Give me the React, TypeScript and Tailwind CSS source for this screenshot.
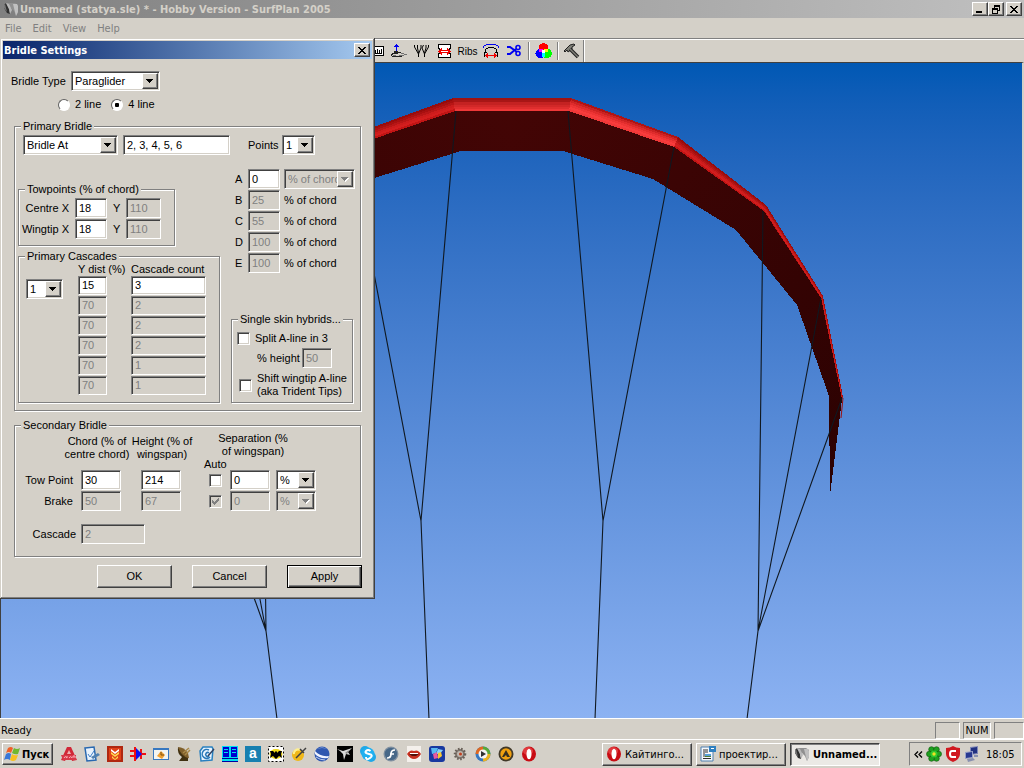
import React, { useState } from "react";

const sunken =
  "border border-t-[#808080] border-l-[#808080] border-r-white border-b-white shadow-[inset_1px_1px_0_#404040,inset_-1px_-1px_0_#d4d0c8]";
const raised =
  "border border-t-white border-l-white border-r-[#404040] border-b-[#404040] shadow-[inset_-1px_-1px_0_#808080] bg-[#d4d0c8]";

type FieldProps = {
  label: string;
  value: string;
  className: string;
  disabled?: boolean;
  id?: string;
};

function Field({ label, value, className, disabled, id }: FieldProps) {
  return (
    <input
      id={id}
      type="text"
      aria-label={label}
      defaultValue={value}
      disabled={disabled}
      className={`${sunken} ${className} shrink-0 rounded-none px-[3px] pb-px text-[11px] leading-3 outline-none disabled:bg-[#d4d0c8] disabled:text-[#808080] ${
        disabled ? "" : "bg-white"
      }`}
    />
  );
}

function DropDown({ label, value, className, disabled, id }: FieldProps) {
  return (
    <div className={`relative h-5 shrink-0 ${className}`}>
      <select
        id={id}
        aria-label={label}
        disabled={disabled}
        className={`${sunken} block h-full w-full appearance-none rounded-none pr-[17px] pl-[3px] text-[11px] leading-3 outline-none disabled:text-[#808080] disabled:opacity-100 ${
          disabled ? "bg-[#d4d0c8]" : "bg-white"
        }`}
      >
        <option>{value}</option>
      </select>
      <span
        className={`${raised} pointer-events-none absolute top-[2px] right-[2px] bottom-[2px] flex w-4 items-center justify-center`}
      >
        <svg width="8" height="5" viewBox="0 0 8 5" shapeRendering="crispEdges">
          {disabled && <path d="M1 1h7v1H7v1H6v1H5v1H4V4H3V3H2V2H1z" fill="#fff" />}
          <path d="M0 0h7v1H6v1H5v1H4v1H3V3H2V2H1V1H0z" fill={disabled ? "#808080" : "#000"} />
        </svg>
      </span>
    </div>
  );
}

function Check({ id, label, checked, disabled }: { id?: string; label?: string; checked?: boolean; disabled?: boolean }) {
  const [on, setOn] = useState(!!checked);
  return (
    <span className="relative block h-[13px] w-[13px] shrink-0">
      <input
        id={id}
        type="checkbox"
        aria-label={label}
        checked={on}
        disabled={disabled}
        onChange={(e) => setOn(e.target.checked)}
        className={`${sunken} block h-[13px] w-[13px] appearance-none ${disabled ? "bg-[#d4d0c8]" : "bg-white"}`}
      />
      {on && (
        <svg className="pointer-events-none absolute inset-0" width="13" height="13" shapeRendering="crispEdges">
          <path
            d="M3 5h1v1h1v1h1V6h1V5h1V4h1V3h1v3H9v1H8v1H7v1H6v1H5V9H4V8H3z"
            fill={disabled ? "#808080" : "#000"}
          />
        </svg>
      )}
    </span>
  );
}

function Radio({ id, checked }: { id: string; checked?: boolean }) {
  return (
    <input
      id={id}
      type="radio"
      name="lines"
      defaultChecked={checked}
      className="h-3 w-3 shrink-0 appearance-none rounded-full border border-t-[#606060] border-r-white border-b-white border-l-[#606060] bg-white checked:bg-[radial-gradient(circle,#000_0_2px,#fff_2.5px)]"
    />
  );
}

function Group({ title, className, children }: { title: string; className: string; children: React.ReactNode }) {
  return (
    <fieldset
      className={`min-w-0 border border-[#808080] shadow-[1px_1px_0_#fff,inset_1px_1px_0_#fff] ${className}`}
    >
      <legend className="ml-[6px] bg-[#d4d0c8] px-[2px] leading-[13px] whitespace-nowrap">{title}</legend>
      {children}
    </fieldset>
  );
}

const chordRows = [
  ["B", "25"],
  ["C", "55"],
  ["D", "100"],
  ["E", "100"],
];

const cascades = [
  ["15", "3"],
  ["70", "2"],
  ["70", "2"],
  ["70", "2"],
  ["70", "1"],
  ["70", "1"],
];

function BridleDialog() {
  return (
    <section
      role="dialog"
      aria-label="Bridle Settings"
      className="absolute top-[38px] left-0 w-[375px] bg-[#d4d0c8] p-[3px] text-[11px] leading-[13px] text-black shadow-[inset_-1px_-1px_0_#404040,inset_1px_1px_0_#d4d0c8,inset_-2px_-2px_0_#808080,inset_2px_2px_0_#fff]"
    >
      <header className="flex h-[18px] items-center justify-between bg-linear-to-r from-[#0a246a] to-[#a6caf0] pr-[2px] pl-px font-['DejaVu_Sans_Condensed','DejaVu_Sans',sans-serif] font-bold text-white">
        <h2>Bridle Settings</h2>
        <button aria-label="Close" className={`${raised} flex h-[14px] w-4 items-center justify-center`}>
          <svg width="8" height="7" viewBox="0 0 8 7" shapeRendering="crispEdges">
            <path d="M0 0h2v1h1v1h2V1h1V0h2v1H7v1H6v1H5v1h1v1h1v1h1v1H6V6H5V5H3v1H2v1H0V6h1V5h1V4h1V3H2V2H1V1H0z" fill="#000" />
          </svg>
        </button>
      </header>

      <div className="mt-3 flex items-center pl-2">
        <label htmlFor="bridle-type" className="w-[60px] whitespace-nowrap">
          Bridle Type
        </label>
        <DropDown id="bridle-type" label="Bridle Type" value="Paraglider" className="w-[89px]" />
      </div>
      <div className="mt-[6px] flex h-[15px] items-center pl-[55px]">
        <Radio id="line2" />
        <label htmlFor="line2" className="mr-[10px] ml-[5px]">2 line</label>
        <Radio id="line4" checked />
        <label htmlFor="line4" className="ml-[5px]">4 line</label>
      </div>

      <Group title="Primary Bridle" className="mx-[11px] mt-2 pb-[7px]">
        <div className="mt-[2px] flex items-center pl-2">
          <DropDown label="Bridle placement" value="Bridle At" className="w-[95px]" />
          <Field label="Bridle at ribs" value="2, 3, 4, 5, 6" className="ml-[5px] h-5 w-[107px]" />
          <label htmlFor="points" className="ml-[18px] w-[34px]">Points</label>
          <DropDown id="points" label="Points" value="1" className="w-[33px]" />
        </div>

        <div className="mt-[14px] flex gap-[11px] pl-[3px]">
          <div className="w-[202px] pt-[14px]">
            <Group title="Towpoints (% of chord)" className="w-[157px] pb-[6px]">
              <div className="mt-[2px] flex flex-col gap-px">
                {["Centre X", "Wingtip X"].map((name) => (
                  <div key={name} className="flex items-center">
                    <label htmlFor={name} className="w-[50px] text-right whitespace-nowrap">{name}</label>
                    <Field id={name} label={name} value="18" className="ml-[6px] h-5 w-8" />
                    <label htmlFor={name + "-y"} className="ml-[6px] w-[13px]">Y</label>
                    <Field id={name + "-y"} label={name + " Y"} value="110" disabled className="h-5 w-[35px]" />
                  </div>
                ))}
              </div>
            </Group>

            <Group title="Primary Cascades" className="mt-1 pb-[7px]">
              <div className="flex pl-[7px]">
                <div className="w-[52px] pt-4">
                  <DropDown label="Cascade level" value="1" className="w-[37px]" />
                </div>
                <div className="w-[53px]">
                  <div className="whitespace-nowrap">Y dist (%)</div>
                  <div className="flex flex-col gap-px">
                    {cascades.map((row, i) => (
                      <Field key={i} label="Y dist" value={row[0]} disabled={i > 0} className="h-[19px] w-[29px]" />
                    ))}
                  </div>
                </div>
                <div>
                  <div className="whitespace-nowrap">Cascade count</div>
                  <div className="flex flex-col gap-px">
                    {cascades.map((row, i) => (
                      <Field key={i} label="Cascade count" value={row[1]} disabled={i > 0} className="h-[19px] w-[75px]" />
                    ))}
                  </div>
                </div>
              </div>
            </Group>
          </div>

          <div className="flex w-[122px] flex-col justify-between">
            <div className="flex flex-col gap-px pl-1">
              <div className="flex items-center">
                <label htmlFor="chord-a" className="w-[13px] shrink-0">A</label>
                <Field id="chord-a" label="A" value="0" className="h-5 w-8" />
                <DropDown label="A unit" value="% of chord" disabled className="ml-1 w-[71px]" />
              </div>
              {chordRows.map(([name, value]) => (
                <div key={name} className="flex items-center">
                  <label htmlFor={"chord-" + name} className="w-[13px] shrink-0">{name}</label>
                  <Field id={"chord-" + name} label={name} value={value} disabled className="h-5 w-8" />
                  <span className="ml-1 whitespace-nowrap">% of chord</span>
                </div>
              ))}
            </div>

            <Group title="Single skin hybrids..." className="pb-1">
              <div className="mt-[6px] flex items-center gap-[5px] pl-[5px]">
                <Check id="split" />
                <label htmlFor="split" className="whitespace-nowrap">Split A-line in 3</label>
              </div>
              <div className="mt-[3px] flex items-center pl-[25px]">
                <label htmlFor="height" className="w-[45px] whitespace-nowrap">% height</label>
                <Field id="height" label="% height" value="50" disabled className="h-5 w-[30px]" />
              </div>
              <div className="mt-1 flex items-center gap-[5px] pl-[7px]">
                <Check id="shift" />
                <label htmlFor="shift" className="whitespace-nowrap">
                  Shift wingtip A-line
                  <br />
                  (aka Trident Tips)
                </label>
              </div>
            </Group>
          </div>
        </div>
      </Group>

      <Group title="Secondary Bridle" className="mx-[11px] mt-2 pb-3">
        <div className="flex h-[38px] text-center whitespace-nowrap">
          <div className="ml-[49px] w-[66px] pt-[3px]">
            Chord (% of
            <br />
            centre chord)
          </div>
          <div className="w-16 pt-[3px]">
            Height (% of
            <br />
            wingspan)
          </div>
          <div className="ml-[10px] w-[98px]">
            <div>
              Separation (%
              <br />
              of wingspan)
            </div>
            <div className="text-left">Auto</div>
          </div>
        </div>
        <div className="flex flex-col gap-px">
          {[
            ["Tow Point", "30", "214"],
            ["Brake", "50", "67"],
          ].map(([name, chord, height], i) => (
            <div key={name} className="flex items-center">
              <span className="w-[58px] text-right whitespace-nowrap">{name}</span>
              <Field label={name + " chord"} value={chord} disabled={i > 0} className="ml-2 h-5 w-10" />
              <Field label={name + " height"} value={height} disabled={i > 0} className="ml-5 h-5 w-10" />
              <span className="ml-7">
                <Check label={name + " auto separation"} checked={i > 0} disabled={i > 0} />
              </span>
              <Field label={name + " separation"} value="0" disabled={i > 0} className="ml-2 h-5 w-10" />
              <DropDown label={name + " unit"} value="%" disabled={i > 0} className="ml-[6px] w-10" />
            </div>
          ))}
        </div>
        <div className="mt-[13px] flex items-center">
          <label htmlFor="cascade" className="w-[61px] text-right">Cascade</label>
          <Field id="cascade" label="Cascade" value="2" disabled className="ml-[5px] h-5 w-16" />
        </div>
      </Group>

      <div className="mt-2 mb-2 flex justify-end gap-5 pr-[10px]">
        <button className={`${raised} h-[23px] w-[75px]`}>OK</button>
        <button className={`${raised} h-[23px] w-[75px]`}>Cancel</button>
        <button className="h-[23px] w-[75px] border border-black bg-[#d4d0c8] shadow-[inset_1px_1px_0_#fff,inset_-1px_-1px_0_#404040,inset_-2px_-2px_0_#808080]">
          Apply
        </button>
      </div>
    </section>
  );
}

// Wing outline from the centre cell out to the tip
type Pt = [number, number];
const outer: Pt[] = [[512, 98], [571, 98], [678, 137], [766, 205], [823, 296], [843, 397]];
const inner: Pt[] = [[512, 111], [569, 111], [674, 147], [764, 211], [821, 298], [842, 399]];
const under: Pt[] = [[512, 151], [563, 151], [653, 179], [736, 230], [797, 305], [829, 396]];
const shades = ["#9f1212", "#a81616", "#c42222", "#d22828", "#df2e2e", "#ef3838"];
const slopeShades = ["#b01414", "#cc2222", "#e02c2c", "#ee3535", "#f83c3c", "#ef3838"];
const edgeShades = ["#980c0c", "#a81010", "#b81616", "#cc1c1c", "#d41e1e", "#c01414"];

function lerp(a: Pt, b: Pt, t: number) {
  return `${a[0] + (b[0] - a[0]) * t},${a[1] + (b[1] - a[1]) * t}`;
}

function HalfWing({ left }: { left?: boolean }) {
  return (
    <g transform={left ? "translate(1024 0) scale(-1 1)" : undefined}>
      <polygon
        points={[...inner, [830, 495] as Pt, ...[...under].reverse()].map((p) => p.join(",")).join(" ")}
        fill="url(#underside)"
        shapeRendering="crispEdges"
      />
      {outer.slice(1).map((_, i) =>
        shades.map((_, k) => {
          const colors = i === 0 ? shades : i === 1 && !left ? slopeShades : edgeShades;
          return (
            <polygon
              key={`${i}-${k}`}
              points={[
                lerp(outer[i], inner[i], k / 6),
                lerp(outer[i + 1], inner[i + 1], k / 6),
                lerp(outer[i + 1], inner[i + 1], (k + 1) / 6),
                lerp(outer[i], inner[i], (k + 1) / 6),
              ].join(" ")}
              fill={colors[k]}
              shapeRendering="crispEdges"
            />
          );
        })
      )}
      <path d="M843 398 841 418" stroke="#9c1010" fill="none" />
      <path
        d="M568 111 603 521 674 147M603 521 595 719M763 211 758 631 821 298M842 398 758 631 747 719"
        fill="none"
        stroke="#101820"
        strokeWidth="1.100"
      />
    </g>
  );
}

function Viewport() {
  return (
    <main className="relative min-h-[560px] flex-1 overflow-hidden border-t border-r-2 border-l border-t-[#404040] border-r-[#d4d0c8] border-l-[#404040] bg-linear-to-b from-[#0058b4] to-[#8cb2f2]">
      <svg
        className="absolute inset-0 h-full w-full"
        viewBox="1 63 1021 655"
        preserveAspectRatio="xMinYMin slice"
        role="img"
        aria-label="Kite model"
      >
        <defs>
          <linearGradient id="underside" x1="0" x2="1" y1="0" y2="1">
            <stop offset="0" stopColor="#430505" />
            <stop offset="1" stopColor="#2c0202" />
          </linearGradient>
        </defs>
        <HalfWing left />
        <HalfWing />
      </svg>
    </main>
  );
}

function Separator() {
  return <span className="h-[18px] w-[2px] border-l border-[#808080] bg-white" />;
}

function ToolBar() {
  const tool = "flex h-5 w-[23px] shrink-0 items-center justify-center";
  return (
    <div className="flex h-[23px] border-t border-white">
      <div className="flex items-center border-r border-[#808080] pl-[364px] shadow-[1px_0_0_#fff]">
        <button aria-label="Measure" className={tool}>
          <svg width="16" height="16" shapeRendering="crispEdges">
            <path d="M0 3h16v10H0z" fill="#000" />
            <path d="M1 4h14v8H1z" fill="#fff" />
            <path d="M3 11h11V6h-1v4h-1V7h-1v3h-1V6H9v4H8V7H7v3H6V6H5v4H4V7H3z" fill="#000" />
          </svg>
        </button>
        <button aria-label="Profile" className={tool}>
          <svg width="18" height="16" shapeRendering="crispEdges">
            <path d="M6 1h1v8H6zM5 2h3v1H5zM4 3h5v1H4z" fill="#0000f0" />
            <path d="M4 8h4v1h3v1H8v1H3v1H2v-2h2zM1 11h1v2H1zM2 13h10v1H2z" fill="#202020" />
            <path d="M11 10h3v1h-3zM9 12h5v1H9zM3 12h3v1H3zM14 11h3v1h-3z" fill="#707070" />
          </svg>
        </button>
        <button aria-label="Bridle" className={tool}>
          <svg width="17" height="16" fill="none" stroke="#000">
            <path d="M5.500 14V11L1.500 4V2M5.500 11 8 5V2M5.500 10 4.500 5V2M11.500 14V11L9 5 10.500 2M11.500 11l4-7V2M11.500 10l1.500-5V2" />
          </svg>
        </button>
        <button aria-label="Width" className={tool}>
          <svg width="15" height="16" shapeRendering="crispEdges">
            <path d="M1 1h13v5h-1v4h1v5H1v-5h1V6H1z" fill="#000" />
            <path d="M2 2h11v3h-1v6h1v3H2v-3h1V5H2z" fill="#fff" />
            <path d="M1 8h1V7h1V6h1V5h1v2h5V5h1v1h1v1h1v1h1v1h-1v1h-1v1h-1v1h-1v-2H5v2H4v-1H3v-1H2V9H1zM4 8v1h7V8z" fill="#f00000" />
          </svg>
        </button>
        <button className={`${tool} text-[10px]`}>Ribs</button>
        <button aria-label="Arc" className={tool}>
          <svg width="18" height="16" shapeRendering="crispEdges">
            <path d="M4 1h10v1H4zM2 2h2v1H2zM14 2h2v1h-2zM1 3h1v2H1zM16 3h1v2h-1z" fill="#0000f0" />
            <path d="M6 4h6v1H6zM4 5h2v1H4zM12 5h2v1h-2zM3 6h1v3H3zM14 6h1v3h-1zM2 9h1v5H2zM15 9h1v5h-1zM2 9h3v1H2zM13 9h3v1h-3z" fill="#000" />
            <path d="M3 12h12v1H3zM5 10h1v5H5zM4 11h1v3H4zM13 11h1v3h-1zM12 10h1v5h-1z" fill="#f00000" />
          </svg>
        </button>
        <button aria-label="Cut" className={tool}>
          <svg width="16" height="14" fill="none" stroke="#0000f0" strokeWidth="2">
            <path d="M1 3h3l7 5M1 10h3l6-5" />
            <circle cx="12" cy="3.500" r="2" strokeWidth="1.600" />
            <circle cx="12" cy="9.500" r="2" strokeWidth="1.600" />
          </svg>
        </button>
        <span className="w-[3px]" />
        <Separator />
        <button aria-label="Colours" className="flex h-5 w-[27px] shrink-0 items-center justify-center">
          <svg width="17" height="16" shapeRendering="crispEdges">
            <circle cx="8.500" cy="5" r="4.800" fill="#f00" />
            <circle cx="5.200" cy="10.500" r="4.800" fill="#00f" />
            <circle cx="12" cy="10.500" r="4.800" fill="#0f0" />
            <path d="M4 6h4v3H4z" fill="#f0f" />
            <path d="M9 6h4v3H9z" fill="#ff0" />
            <path d="M7 9h3v5H7z" fill="#0ff" />
            <path d="M7 7h3v3H7z" fill="#fff" />
          </svg>
        </button>
        <Separator />
        <button aria-label="Build" className="flex h-5 w-6 items-center justify-center">
          <svg width="17" height="16">
            <path d="m1 8 6-6 4-1 1 1-3 2v2L5 9 4 7 2 9z" fill="#808078" stroke="#202020" />
            <path d="m7 6 8 8" stroke="#202020" strokeWidth="3.500" />
            <path d="m7 6 8 8" stroke="#808078" strokeWidth="1.500" />
          </svg>
        </button>
      </div>
    </div>
  );
}

function WingIcon() {
  return (
    <svg width="16" height="16" viewBox="0 0 16 16" className="shrink-0">
      <path d="M3 2h9l3 2v7l-2 4-2-5-3-3-3 1z" fill="#909090" />
      <path d="M10 3h4l1 2v6l-2 4z" fill="#c0c0c0" />
      <path d="M1 4 3 2l3 6 1 5-3-1-3-5z" fill="#303030" />
      <path d="m3 2 3 1 3 6-2 4-1-5z" fill="#b8b8b8" />
      <path d="m1 4 1-1 2 8-3-4z" fill="#787878" />
    </svg>
  );
}

function OperaIcon() {
  return (
    <svg width="16" height="16" viewBox="0 0 16 16" className="shrink-0">
      <ellipse cx="8" cy="8" rx="7" ry="7.500" fill="#c80c14" />
      <ellipse cx="7" cy="5" rx="5" ry="4" fill="#f05858" opacity=".6" />
      <ellipse cx="8" cy="8" rx="2.500" ry="5.300" fill="#fff" />
    </svg>
  );
}

const quickLaunch: { name: string; icon: React.ReactNode }[] = [
  { name: "AutoCAD", icon: <><path d="M6 1h4l6 13-5 1-1-4H6l-2 4-4-1z" fill="#d02838" /><path d="m8 4 2 4H6z" fill="#f0b0b0" /><path d="M0 9h15v5H2z" fill="#d83848" /><path d="M3 12q1-3 3 0V10m2 2q2-3 3 0m1 0V10h2v2" stroke="#f8b0b8" fill="none" /></> },
  { name: "Notes", icon: <><path d="m1 2 9-1 2 13-9 1z" fill="#e8f2fc" stroke="#2868b0" strokeWidth="1.500" /><path d="m4 8 2 3 4-6" stroke="#4080c8" fill="none" /><path d="m7 11 7-4 2 2-7 4z" fill="#5080b0" /></> },
  { name: "Downloads", icon: <><path d="M0 0h16v16H0z" fill="#b02810" /><path d="M2 2h12v12H2z" fill="#e04018" /><path d="m4 3 4 3 4-3v2L8 8 4 5z" fill="#fff" /><path d="m4 6 4 3 4-3v2l-4 3-4-3zM5 10l3 3 3-3v2l-3 2-3-2z" fill="#ffd850" /></> },
  { name: "Diode", icon: <><path d="M0 4h5v2H0zM0 9h5v2H0zM4 1h2v14H4zM11 7h5v2h-5zM10 3h2v10h-2z" fill="#f01010" /><path d="M6 2 12 8l-6 6z" fill="#1010f0" /></> },
  { name: "Scheduler", icon: <><path d="M0 2h16v12H0z" fill="#3878c0" /><path d="M1 4h14v9H1z" fill="#f4f4f0" /><path d="m8 5 4 4-3 4-5-3z" fill="#f0a030" /><path d="M8 6v3h3" stroke="#805010" fill="none" /></> },
  { name: "Satellite", icon: <><path d="M2 1q6 0 10 6l1 5q-5 1-8-3T2 1z" fill="#80602c" /><path d="M2 1q-1 7 4 10l-3 4h9v-3Q5 10 2 1z" fill="#403010" /><path d="m7 7 6-5M9 9l5-5" stroke="#a88848" strokeWidth="1.500" /></> },
  { name: "Mail notes", icon: <><path d="M4 1h9l1 2-1 11-11 1L1 5z" fill="#e8f4ff" stroke="#2880c0" strokeWidth="1.500" /><path d="M10 4a4.500 4.500 0 1 0 1 7M10 7a2 2 0 1 0 0 3" stroke="#2878b8" fill="none" strokeWidth="1.500" /><path d="m9 10 6-7" stroke="#304060" strokeWidth="1.500" /></> },
  { name: "Commander", icon: <g shapeRendering="crispEdges"><path d="M0 0h16v16H0z" fill="#0000a0" /><path d="M0 0h8v12H0zM8 0h8v12H8z" fill="#00e0f0" /><path d="M1 1h6v10H1zM9 1h6v10H9z" fill="#0000d0" /><path d="M2 3h4v1H2zM2 6h4v1H2zM10 3h4v1h-4zM10 6h4v1h-4zM0 13h16v2H0z" fill="#00e0f0" /></g> },
  { name: "Avant", icon: <><path d="M0 0h16v16H0z" fill="#1880b0" /><text x="4" y="12" fontSize="14" fontWeight="bold" fill="#fff" fontFamily="Liberation Sans">a</text></> },
  { name: "The Bat!", icon: <><path d="M.5.500h15v15H.5z" fill="#fff" stroke="#000" strokeDasharray="2 2" /><ellipse cx="8" cy="8" rx="6.500" ry="5" fill="#f0d818" /><path d="M2 5h3l2 2V5l1 1 1-1v2l2-2h3l-1 3 1 4-3-2-3 3-3-3-3 2 1-4z" fill="#000" /></> },
  { name: "Tools", icon: <><circle cx="7" cy="9" r="6" fill="#f0b818" /><path d="M3 8a4 4 0 0 1 6-4" stroke="#fff090" strokeWidth="2" fill="none" /><path d="m5 12 10-10M9 3l4 4" stroke="#404040" strokeWidth="1.500" /></> },
  { name: "Google Earth", icon: <><circle cx="8" cy="8" r="7.500" fill="#3058b0" /><path d="M3 3a7 5 0 0 1 10 0q-5-2-10 0z" fill="#b0c8f0" /><path d="M1 5q5 6 14 5l-1 2Q5 13 1 8z" fill="#f0f4ff" /><path d="M2 11q4 3 9 3" stroke="#c0d0f0" fill="none" /></> },
  { name: "Flight", icon: <><path d="M0 0h16v16H0z" fill="#000" /><path d="m0 3 6 2 3-1 6-2-4 4 2 3-4-1-2 6-1-6-3-3z" fill="#d8d8d8" /><path d="m8 7 4-3-2 4z" fill="#888" /></> },
  { name: "Skype", icon: <><circle cx="5" cy="5" r="5" fill="#20a8e8" /><circle cx="11" cy="11" r="5" fill="#20a8e8" /><circle cx="8" cy="8" r="6.500" fill="#20b0f0" /><path d="M10.500 5Q8 3 6 5t3 3 1 4-4-1" stroke="#fff" strokeWidth="2" fill="none" /></> },
  { name: "Flash", icon: <><circle cx="8" cy="8" r="7.500" fill="#8090a0" /><circle cx="8" cy="8" r="6.200" fill="#486888" /><path d="M12 4Q8 4 8 8t-4 4M7 8h4" stroke="#fff" strokeWidth="1.700" fill="none" /></> },
  { name: "Lips", icon: <><path d="M1 0h14v16H1z" fill="#f4f0ec" /><path d="M1 8Q4 3 8 5q4-2 7 3-3 5-7 5T1 8z" fill="#c83020" /><path d="M3 8h10l-3 2H6z" fill="#501008" /><path d="M4 7h8v1H4z" fill="#fff" /></> },
  { name: "Puzzle", icon: <><rect width="16" height="16" rx="3" fill="#1838a0" /><path d="M2 2h7l-2 5-4 1z" fill="#58b8f0" /><path d="m9 3 5 1-3 4H7z" fill="#88d0f8" /><path d="m4 8 4-2 1 6-4 1z" fill="#e858a0" /><path d="m9 7 3-1 1 4-4 3z" fill="#f8c830" /></> },
  { name: "Settings", icon: <><circle cx="8" cy="8" r="5" fill="#807870" stroke="#686058" strokeWidth="2.500" strokeDasharray="1.500 1.500" /><circle cx="8" cy="8" r="3" fill="#c0b8b0" /><circle cx="8.500" cy="8" r="1.500" fill="#c04020" /></> },
  { name: "Media Player", icon: <><circle cx="8" cy="8" r="7.500" fill="#3878c0" /><path d="M8 8V.5A7.500 7.500 0 0 1 15.500 8z" fill="#58a838" /><path d="M8 8h7.500A7.500 7.500 0 0 1 8 15.500z" fill="#e8b020" /><path d="M8 8H.5A7.500 7.500 0 0 1 8 .5z" fill="#e06820" /><circle cx="8" cy="8" r="4.500" fill="#f4f4f4" /><path d="m6 5 5 3-5 3z" fill="#303030" /></> },
  { name: "AIMP", icon: <><circle cx="8" cy="8" r="7.500" fill="#403828" /><circle cx="8" cy="8" r="5.700" fill="#f0a010" /><path d="m8 4 4 7H9l-1-2-2 2H4z" fill="#383020" /></> },
];

function TaskBar() {
  const task = "flex h-[23px] w-[90px] items-center gap-[3px] overflow-hidden px-[3px] text-left whitespace-nowrap";
  return (
    <footer className="flex h-[29px] items-center border-t border-white px-[2px] font-['DejaVu_Sans_Condensed','DejaVu_Sans',sans-serif] text-[11px]">
      <button className={`${raised} flex h-[22px] w-[51px] items-center gap-px pl-px font-bold`}>
        <svg width="17" height="16" viewBox="0 0 17 16" className="shrink-0">
          <path d="M4 2q3-2 5 0L7 7q-2-2-5 0z" fill="#f06028" />
          <path d="M10 2q3 2 6 0l-2 6q-3 1-6-1z" fill="#70b830" />
          <path d="M2 8q3-2 5 0l-1 6q-3-2-6 0z" fill="#3878d8" />
          <path d="M8 8q2 2 6 1l-2 5q-3 2-6 0z" fill="#f8c020" />
        </svg>
        Пуск
      </button>
      <nav className="ml-2 flex gap-[7px]">
        {quickLaunch.map((item) => (
          <button key={item.name} aria-label={item.name}>
            <svg width="16" height="16" viewBox="0 0 16 16">{item.icon}</svg>
          </button>
        ))}
        <button aria-label="Opera">
          <OperaIcon />
        </button>
      </nav>
      <div className="ml-auto flex gap-1">
        <button className={`${raised} ${task}`}>
          <OperaIcon />
          Кайтинго...
        </button>
        <button className={`${raised} ${task}`}>
          <svg width="16" height="16" viewBox="0 0 16 16" className="shrink-0">
            <path d="M1 1h12v14H1z" fill="#f4f8fc" stroke="#5080b0" />
            <path d="M3 4h5M3 6h5M3 8h2M3 10h2M3 12.500h8" stroke="#303030" />
            <path d="M5 8h6v3H5z" fill="#58a0d8" />
            <path d="M5 10h6v1H5z" fill="#508030" />
            <path d="M9 0h7v6H9z" fill="#3080c0" />
            <path d="M11 2h3v1h-3z" fill="#fff" />
          </svg>
          проектир...
        </button>
        <button
          className={`${task} border border-t-[#404040] border-r-white border-b-white border-l-[#404040] bg-[#ebe9e5] font-bold shadow-[inset_1px_1px_0_#808080]`}
        >
          <WingIcon />
          Unnamed...
        </button>
      </div>
      <div className="ml-[29px] flex h-6 w-[113px] items-center gap-[3px] border border-t-[#808080] border-r-white border-b-white border-l-[#808080] pl-1">
        <button aria-label="Show hidden icons">
          <svg width="9" height="7" fill="none" stroke="#000" strokeWidth="1.300">
            <path d="m4 .5-3 3 3 3M8 .5l-3 3 3 3" />
          </svg>
        </button>
        <svg width="16" height="16" viewBox="0 0 16 16">
          <g fill="#20a020" stroke="#085808" strokeWidth=".6">
            <circle cx="5.500" cy="3.500" r="2.800" /><circle cx="10.500" cy="3.500" r="2.800" />
            <circle cx="12.700" cy="8" r="2.800" /><circle cx="10.500" cy="12.500" r="2.800" />
            <circle cx="5.500" cy="12.500" r="2.800" /><circle cx="3.300" cy="8" r="2.800" />
          </g>
          <circle cx="8" cy="8" r="3.500" fill="#30c830" />
          <circle cx="8" cy="8" r="1.700" fill="#f0e020" />
        </svg>
        <svg width="16" height="16" viewBox="0 0 16 16">
          <path d="M1 2Q5 2 8 0q3 2 7 2v6q0 5-7 8-7-3-7-8z" fill="#d01820" />
          <path d="M11 5H7Q5 5 5 8t2 3h4" fill="none" stroke="#fff" strokeWidth="2" />
        </svg>
        <svg width="16" height="16" viewBox="0 0 16 16">
          <path d="m6 1 8-1v8l-8 1z" fill="#8088b8" />
          <path d="m7 2 6-1v6l-6 1z" fill="#203080" />
          <path d="m1 6 8-1v7l-8 1z" fill="#98a0c8" />
          <path d="m2 7 6-1v5l-6 1z" fill="#283890" />
          <path d="m3 13 6-1 2 2-7 2zM10 9h4v2h-4z" fill="#8890b0" />
        </svg>
        <time className="ml-[3px]">18:05</time>
      </div>
    </footer>
  );
}

export default function App() {
  const caption = `${raised} flex h-[14px] w-4 items-center justify-center`;
  return (
    <div className="relative flex min-h-screen flex-col bg-[#d4d0c8] font-['Liberation_Sans',Arial,sans-serif] text-[11px] leading-[13px] text-black">
      <header className="flex h-[18px] items-center bg-linear-to-r from-[#808080] to-[#c0c0c0] pr-[2px] pl-[3px]">
        <WingIcon />
        <h1 className="ml-px flex-1 font-['DejaVu_Sans_Condensed','DejaVu_Sans',sans-serif] font-bold text-[#d4d0c8]">
          Unnamed (statya.sle) * - Hobby Version - SurfPlan 2005
        </h1>
        <button aria-label="Minimize" className={caption}>
          <svg width="8" height="7" shapeRendering="crispEdges"><path d="M0 5h6v2H0z" /></svg>
        </button>
        <button aria-label="Restore" className={caption}>
          <svg width="8" height="9" shapeRendering="crispEdges">
            <path d="M2 0h6v6H6V5h1V2H3v1H2zM0 3h6v6H0zM1 5v3h4V5z" fillRule="evenodd" />
          </svg>
        </button>
        <button aria-label="Close window" className={`${caption} ml-[2px]`}>
          <svg width="8" height="7" viewBox="0 0 8 7" shapeRendering="crispEdges">
            <path d="M0 0h2v1h1v1h2V1h1V0h2v1H7v1H6v1H5v1h1v1h1v1h1v1H6V6H5V5H3v1H2v1H0V6h1V5h1V4h1V3H2V2H1V1H0z" />
          </svg>
        </button>
      </header>
      <nav className="flex h-[21px] items-center gap-[11px] border-b border-[#808080] pl-[5px] font-['DejaVu_Sans_Condensed','DejaVu_Sans',sans-serif] text-[#808080]">
        <button>File</button>
        <button>Edit</button>
        <button>View</button>
        <button>Help</button>
      </nav>
      <ToolBar />
      <Viewport />
      <div className="flex h-[21px] items-center gap-[3px] border-t border-white pt-[2px] pl-px font-['DejaVu_Sans_Condensed','DejaVu_Sans',sans-serif]">
        <span className="flex-1">Ready</span>
        <span className="h-[17px] w-[25px] border border-t-[#808080] border-r-white border-b-white border-l-[#808080]" />
        <span className="h-[17px] w-[28px] border border-t-[#808080] border-r-white border-b-white border-l-[#808080] text-center leading-4">
          NUM
        </span>
        <span className="h-[17px] w-[30px] border border-t-[#808080] border-r-white border-b-white border-l-[#808080]" />
      </div>
      <TaskBar />
      <BridleDialog />
    </div>
  );
}
